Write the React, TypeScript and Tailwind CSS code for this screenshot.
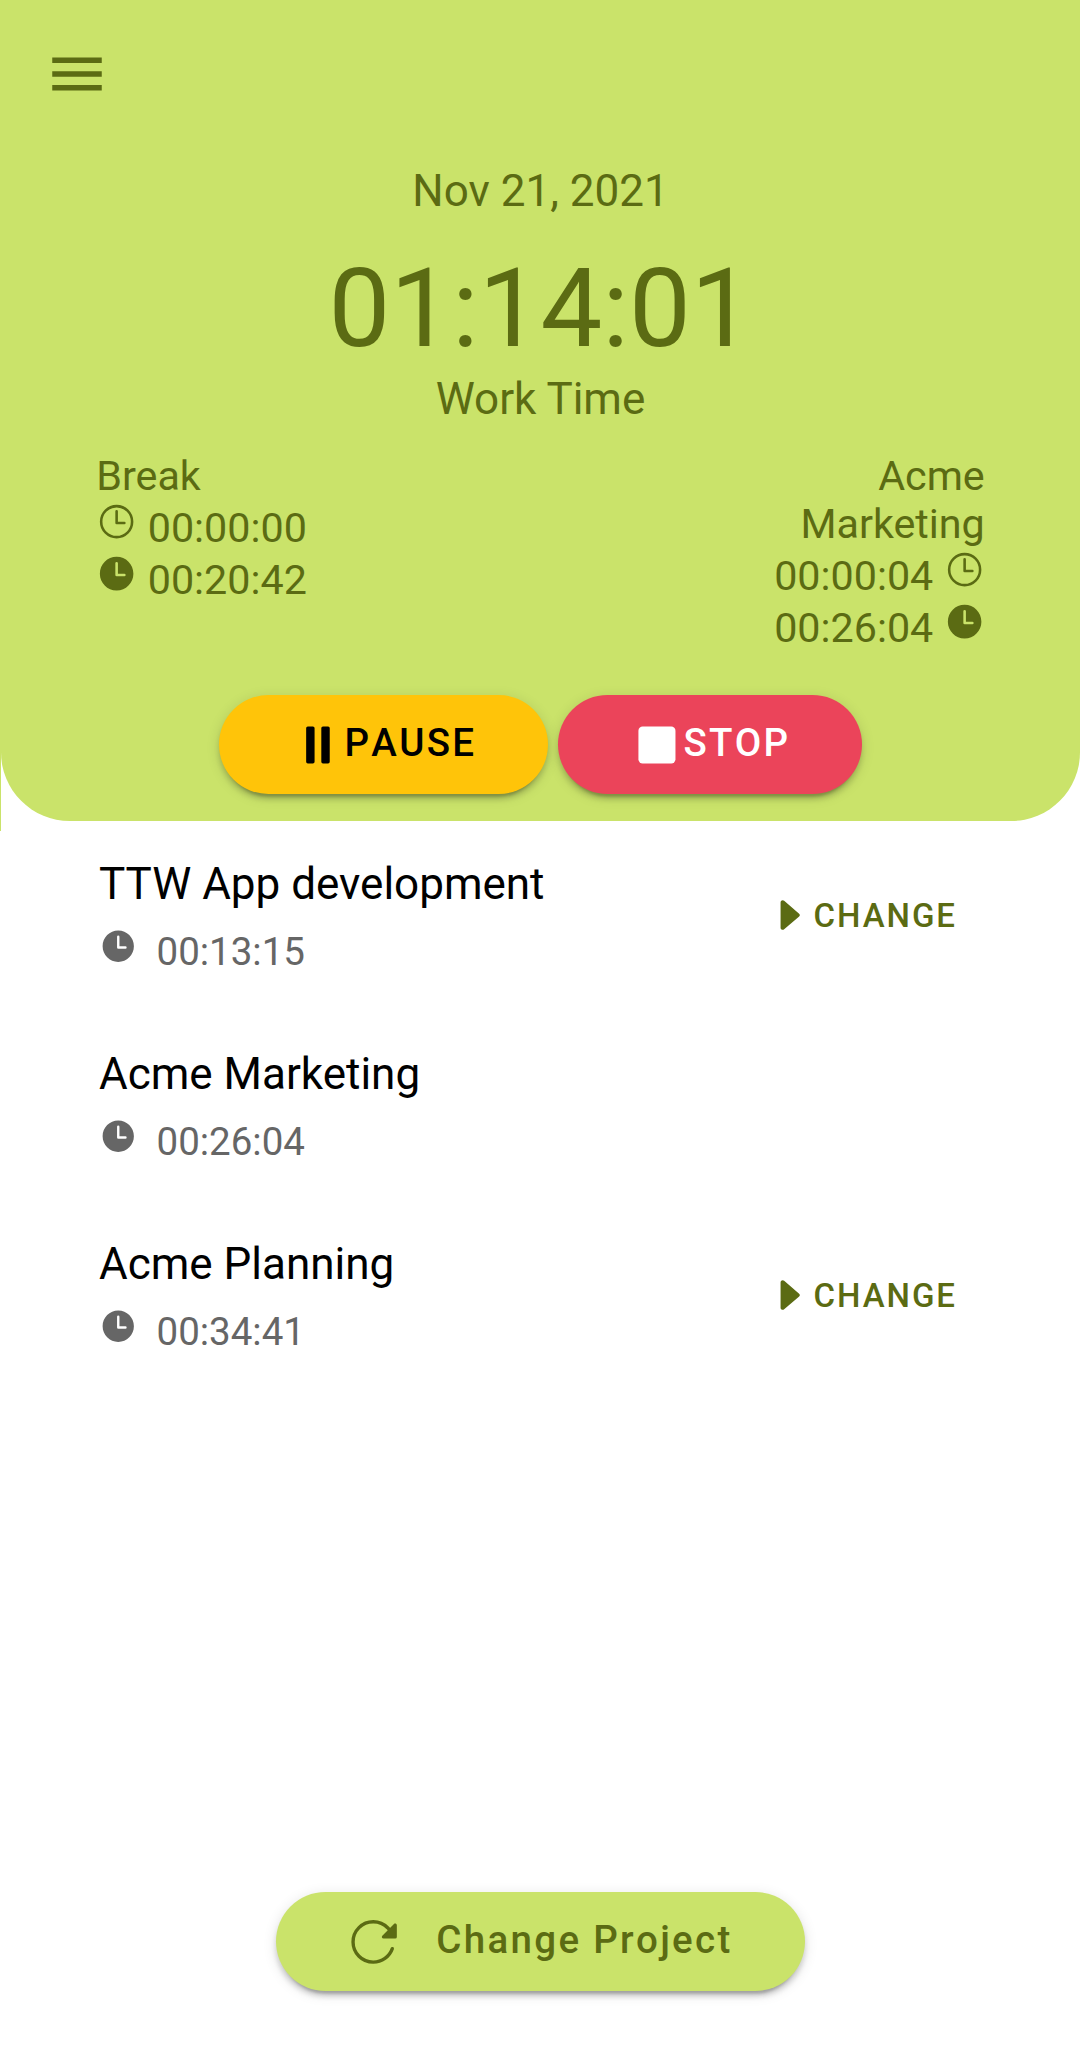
import { IoCaretForward, IoMenuSharp, IoPause, IoReloadOutline, IoStop, IoTime, IoTimeOutline } from 'react-icons/io5';

type Project = {
  id: number;
  name: string;
  total: string;
  active?: boolean;
};

const projects: Project[] = [
  { id: 1, name: 'TTW App development', total: '00:13:15' },
  { id: 2, name: 'Acme Marketing', total: '00:26:04', active: true },
  { id: 3, name: 'Acme Planning', total: '00:34:41' },
];

const raised =
  'h-[99px] flex items-center justify-center rounded-full text-[38.5px] font-medium tracking-[0.06em] [font-kerning:none] shadow-[0_8.25px_2.75px_-5.5px_rgba(0,0,0,0.2),0_5.5px_5.5px_0_rgba(0,0,0,0.14),0_2.75px_13.75px_0_rgba(0,0,0,0.12)]';

const clock = 'inline align-baseline size-[41.25px]';

function ProjectRow({ project }: { project: Project }) {
  return (
    <li className="flex h-[190px] justify-between">
      <div>
        <h2 className="text-[44px] leading-[52px] text-black">{project.name}</h2>
        <p className="mt-[17px] text-[38.5px] leading-[48px] text-[#666666]">
          <IoTime className="inline align-[-0.7px] size-[38.5px] mr-[19px]" />
          {project.total}
        </p>
      </div>
      {!project.active && (
        <button className="mt-[35px] mr-[25px] flex h-[46px] items-center text-[33px] font-medium tracking-[0.06em] text-[#5b6b13]">
          <IoCaretForward className="size-[46.2px]" />
          CHANGE
        </button>
      )}
    </li>
  );
}

export default function App() {
  return (
    <div className="relative flex h-[2056px] w-[1080px] flex-col overflow-hidden bg-white font-['Roboto',sans-serif]">
      {/* sliver of the toolbar background beside the rounded panel */}
      <div className="absolute left-0 top-0 h-[831px] w-px bg-[#cae36a]" />

      <header className="ml-px h-[820.5px] shrink-0 rounded-b-[68.75px] bg-[#cae36a] text-[#5b6b13]">
        <button className="ml-[43px] mt-[41px] block">
          <IoMenuSharp className="size-[66px]" />
        </button>

        <div className="mt-[58px] flex flex-col items-center">
          <p className="text-[44px] leading-[52px]">Nov 21, 2021</p>
          <p className="mt-[27px] text-[110px] leading-[129px]">01:14:01</p>
          <p className="text-[44px] leading-[52px]">Work Time</p>
        </div>

        <div className="mt-[27px] flex h-[243px] justify-between pl-[95.25px] pr-[95.25px] text-[41.25px] leading-[48px]">
          <div>
            <p className="mb-px">Break</p>
            <p className="h-[52px]"><IoTimeOutline className={clock} /> 00:00:00</p>
            <p className="h-[52px]"><IoTime className={clock} /> 00:20:42</p>
          </div>
          <div className="w-[215px] text-right">
            <p className="mb-px">Acme Marketing</p>
            <p className="h-[52px]">00:00:04 <IoTimeOutline className={clock} /></p>
            <p className="h-[52px]">00:26:04 <IoTime className={clock} /></p>
          </div>
        </div>

        <div className="flex justify-center gap-[10px]">
          <button className={`${raised} w-[329px] bg-[#ffc409] text-black`}>
            <IoPause className="size-[53.9px]" />
            <span className="pb-[3px]">PAUSE</span>
          </button>
          <button className={`${raised} w-[304px] bg-[#eb445a] text-white`}>
            <IoStop className="size-[53.9px]" />
            <span className="pb-[3px]">STOP</span>
          </button>
        </div>
      </header>

      <ul className="mt-[37px] flex-1 pl-[99px] pr-[98px]">
        {projects.map((project) => (
          <ProjectRow key={project.id} project={project} />
        ))}
      </ul>

      <footer className="mb-[65px] flex justify-center">
        <button className={`${raised} w-[529px] gap-[34px] pl-px bg-[#cae36a] text-[#5b6b13]`}>
          <IoReloadOutline className="size-[53.9px]" />
          <span className="pb-[3px]">Change Project</span>
        </button>
      </footer>
    </div>
  );
}
